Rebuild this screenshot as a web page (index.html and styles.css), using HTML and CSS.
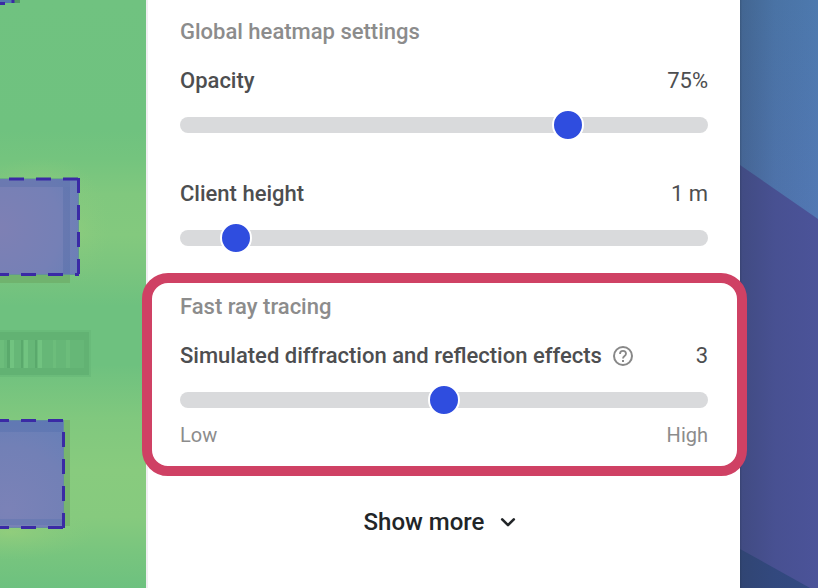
FILE: index.html
```html
<!DOCTYPE html>
<html lang="en">
<head>
<meta charset="utf-8">
<meta name="viewport" content="width=device-width, initial-scale=1">
<title>Heatmap settings</title>
<link rel="stylesheet" href="styles.css">
</head>
<body>
<div class="workspace">
  <div class="map" aria-hidden="true">
    <svg class="scene" viewBox="0 0 146 588" preserveAspectRatio="xMaxYMin slice">
      <defs>
        <linearGradient id="signal" x1="0" y1="0" x2="0" y2="588" gradientUnits="userSpaceOnUse">
          <stop offset="0" stop-color="#70c280"/>
          <stop offset=".22" stop-color="#6fc27f"/>
          <stop offset=".27" stop-color="#74c47e"/>
          <stop offset=".33" stop-color="#80c87e"/>
          <stop offset=".4" stop-color="#83c97e"/>
          <stop offset=".46" stop-color="#7ac57e"/>
          <stop offset=".52" stop-color="#6ec17f"/>
          <stop offset=".62" stop-color="#6ec17f"/>
          <stop offset=".71" stop-color="#80c87e"/>
          <stop offset=".8" stop-color="#88cb7e"/>
          <stop offset=".88" stop-color="#86ca7e"/>
          <stop offset=".94" stop-color="#78c57e"/>
          <stop offset="1" stop-color="#6dc17f"/>
        </linearGradient>
        <radialGradient id="glow">
          <stop offset="0" stop-color="#9ad07b" stop-opacity=".8"/>
          <stop offset="1" stop-color="#8acb7e" stop-opacity="0"/>
        </radialGradient>
        <radialGradient id="roofA" cx="0" cy="228" r="100" gradientUnits="userSpaceOnUse">
          <stop offset="0" stop-color="#7e80b4"/>
          <stop offset=".6" stop-color="#7580b6"/>
          <stop offset="1" stop-color="#667fb7"/>
        </radialGradient>
        <radialGradient id="roofB" cx="8" cy="510" r="105" gradientUnits="userSpaceOnUse">
          <stop offset="0" stop-color="#7b82b7"/>
          <stop offset=".6" stop-color="#7280b6"/>
          <stop offset="1" stop-color="#657fb8"/>
        </radialGradient>
      </defs>
      <rect width="146" height="588" fill="url(#signal)"/>
      <ellipse cx="40" cy="185" rx="55" ry="28" fill="url(#glow)" opacity=".5"/>
      <ellipse cx="80" cy="228" rx="30" ry="56" fill="url(#glow)" opacity=".35"/>
      <ellipse cx="10" cy="532" rx="85" ry="28" fill="url(#glow)" opacity=".8"/>

      <path d="M12 0h8v3h-8z" fill="#509a60"/>
      <path d="M0 0h13v3H0z" fill="#5279ad"/>
      <path d="M0 3.500h5M12 1.500h2M13 0v3" stroke="#3a2aa5" stroke-width="3" fill="none"/>

      <path d="M0 275h70v8H0z" fill="#70b36e"/>
      <path d="M0 179h79v96H0z" fill="url(#roofA)"/>
      <path d="M0 179h70v8H0z" fill="#4f6ba5" opacity=".3"/>
      <path d="M63 187h7v87h-7z" fill="#4f6ba5" opacity=".35"/>
      <path d="M0 178.500h79M78.500 178v97M0 274.500h79" stroke="#5b9c88" stroke-opacity=".6" fill="none"/>
      <g stroke="#3a2aa5" stroke-width="3" fill="none">
        <path d="M9 179h69" stroke-dasharray="15 12"/>
        <path d="M78.500 178v97" stroke-dasharray="15 12"/>
        <path d="M0 274.500h9M21 274.500h15M48 274.500h15M75 274.500h4"/>
      </g>

      <path d="M0 330h91v47H0z" fill="#62b273" opacity=".4"/>
      <path d="M0 332h89v43H0z" fill="#62b273"/>
      <path d="M0 340h84v28H0z" fill="#66b777"/>
      <path d="M7 340h3v28H7zM21 340h2v28h-2zM35 340h2v28h-2z" fill="#5aa96c"/>
      <g fill="#71c380">
        <path d="M10 340h4v28h-4zM24 340h4v28h-4zM38 340h4v28h-4z"/>
        <path d="M0 340h4v28H0zM53 340h3v28h-3zM66 340h4v28h-4z" opacity=".5"/>
      </g>

      <path d="M63 420h7v106h-7z" fill="#78b56f"/>
      <path d="M0 420h64v108H0z" fill="url(#roofB)"/>
      <path d="M0 420h63v12H0z" fill="#506dac" opacity=".35"/>
      <path d="M0 519h63v6H0z" fill="#506dac" opacity=".3"/>
      <path d="M0 420.500h64M63.500 420v108M0 527.500h64" stroke="#648fa0" stroke-opacity=".7" fill="none"/>
      <g stroke="#3a2aa5" stroke-width="3" fill="none">
        <path d="M0 420.500h9M21 420.500h15M48 420.500h15"/>
        <path d="M63.500 432v96" stroke-dasharray="15 12"/>
        <path d="M0 527.500h9M21 527.500h15M48 527.500h15"/>
      </g>
    </svg>
  </div>

  <main class="panel">
    <section class="group">
      <h2 class="group-title">Global heatmap settings</h2>
      <div class="setting">
        <div class="row">
          <label class="name" for="opacity">Opacity</label>
          <output class="value" for="opacity">75%</output>
        </div>
        <input class="slider" id="opacity" type="range" min="0" max="100" value="75">
      </div>
      <div class="setting">
        <div class="row">
          <label class="name" for="client-height">Client height</label>
          <output class="value" for="client-height">1 m</output>
        </div>
        <input class="slider" id="client-height" type="range" min="0.2" max="10" step="0.1" value="1">
      </div>
    </section>

    <section class="group highlighted">
      <h2 class="group-title">Fast ray tracing</h2>
      <div class="setting">
        <div class="row">
          <div class="name-help">
            <label class="name" for="effects">Simulated diffraction and reflection effects</label>
            <button class="help" type="button" aria-label="Help">
              <svg width="20" height="20" viewBox="0 0 20 20" fill="none" stroke="currentColor">
                <circle cx="10" cy="10" r="9" stroke-width="2"/>
                <path d="M7 8C7 6 8.300 4.900 10 4.900s3 1.100 3 2.900c0 2.200-3 2.300-3 4.700" stroke-width="1.800"/>
                <path d="M10 14v2" stroke-width="2"/>
              </svg>
            </button>
          </div>
          <output class="value" for="effects">3</output>
        </div>
        <input class="slider" id="effects" type="range" min="1" max="5" value="3">
        <div class="scale"><span>Low</span><span>High</span></div>
      </div>
    </section>

    <button class="more" type="button">
      Show more
      <svg width="24" height="24" viewBox="0 0 24 24" fill="none" stroke="currentColor" stroke-width="2.600" stroke-linecap="round" stroke-linejoin="round"><path d="M6.200 9.400 12 15.200l5.800-5.800"/></svg>
    </button>
  </main>

  <div class="backdrop" aria-hidden="true">
    <svg class="scene" viewBox="0 0 78 588" preserveAspectRatio="xMinYMin slice">
      <defs>
        <linearGradient id="shade">
          <stop offset="0" stop-color="#223044" stop-opacity=".45"/>
          <stop offset=".03" stop-color="#2b3a50" stop-opacity=".3"/>
          <stop offset=".45" stop-color="#2b3a50" stop-opacity=".1"/>
          <stop offset="1" stop-color="#2b3a50" stop-opacity="0"/>
        </linearGradient>
        <linearGradient id="sky" x1="0" y1="0" x2="0" y2="1">
          <stop offset="0" stop-color="#4d79ae"/>
          <stop offset="1" stop-color="#5278b4"/>
        </linearGradient>
      </defs>
      <path d="M0 0h78v588H0z" fill="#4b5399"/>
      <path d="M0 165V0h78v219z" fill="url(#sky)"/>
      <path d="M0 549l70 39H0z" fill="#334a83"/>
      <path d="M0 0h78v588H0z" fill="url(#shade)"/>
    </svg>
  </div>
</div>
</body>
</html>
```
FILE: styles.css
```css
* {
  box-sizing: border-box;
}

body {
  margin: 0;
  font-family: Roboto, "Liberation Sans", sans-serif;
  font-size: 22px;
  line-height: 32px;
  color: #4d4e50;
}

.workspace {
  display: grid;
  grid-template-columns: 146fr 594fr 78fr;
  min-height: 100vh;
  overflow: hidden;
}

.map,
.backdrop {
  display: grid;
  min-width: 0;
  overflow: hidden;
}

.map {
  background: #6ec17f;
}

.backdrop {
  background: #4b5399;
}

.scene {
  display: block;
  width: 100%;
  height: 100%;
  min-height: 0;
}

.panel {
  position: relative;
  z-index: 1;
  display: flex;
  flex-direction: column;
  padding: 16px 32px 32px;
  border-left: 2px solid #f0eef1;
  background: #fff;
}

.group {
  display: flex;
  flex-direction: column;
}

.group-title {
  margin: 0 0 17px;
  font-size: 22px;
  font-weight: 500;
  color: #8c8c8c;
}

.setting {
  display: flex;
  flex-direction: column;
}

.setting + .setting {
  margin-top: 37px;
}

.row {
  display: flex;
  justify-content: space-between;
  margin-bottom: 12px;
}

.name-help {
  display: flex;
  align-items: center;
  gap: 11px;
}

.name {
  font-weight: 500;
}

.help {
  display: flex;
  padding: 0;
  border: 0;
  background: none;
  color: #888;
}

.slider {
  display: block;
  width: 100%;
  height: 32px;
  margin: 0;
  background: none;
  appearance: none;
}

.slider::-webkit-slider-runnable-track {
  height: 16px;
  border-radius: 8px;
  background: #d9dadc;
}

.slider::-webkit-slider-thumb {
  width: 32px;
  height: 32px;
  margin-top: -8px;
  border: 2px solid #fff;
  border-radius: 50%;
  background: #2f4ddf;
  appearance: none;
}

.highlighted {
  margin: 19px -39px 0 -38px;
  padding: 8px 29px 19px 28px;
  border: 10px solid #cf4164;
  border-radius: 26px;
}

.scale {
  display: flex;
  justify-content: space-between;
  margin-top: 7px;
  font-size: 20px;
  line-height: 24px;
  color: #8c8c8c;
}

.more {
  display: flex;
  align-items: center;
  align-self: center;
  gap: 12px;
  margin-top: 30px;
  padding: 0 4px 0 0;
  border: 0;
  background: none;
  font: 500 24px/32px Roboto, "Liberation Sans", sans-serif;
  color: #222528;
}
```
